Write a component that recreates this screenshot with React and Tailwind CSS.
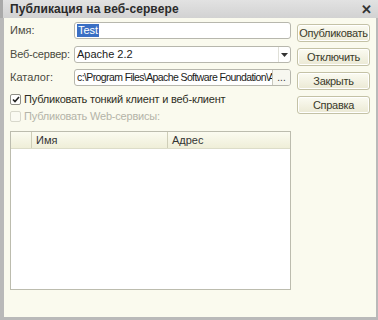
import React from "react";

const font = { fontFamily: '"Liberation Sans", Arial, sans-serif' };

function Btn({ children }) {
  return (
    <div className="h-[18px] w-[73px] flex items-center justify-center rounded-[3px] border border-[#c4c2a6] bg-gradient-to-b from-[#fbfbf2] to-[#ebe9d4] text-[11px] tracking-[-0.3px] text-[#3a3a2a] shadow-[inset_0_0_0_1px_#ffffff]">
      {children}
    </div>
  );
}

export default function App() {
  return (
    <div className="w-[378px] h-[320px] bg-[#b9b9b9] flex flex-col overflow-hidden" style={font}>
      <div className="h-[18px] flex items-center justify-between pl-[7px] pr-[6px] bg-gradient-to-b from-[#e2e2e2] to-[#d2d2d2] border-l-[3px] border-[#a9a9a9]">
        <span className="text-[12px] font-bold text-[#2a2a2a] tracking-[0.1px]">Публикация на веб-сервере</span>
        <span className="text-[13px] font-bold text-[#333] leading-none">✕</span>
      </div>
      <div className="flex-1 ml-[4px] mr-[2px] mb-[3px] bg-[#fafaee] flex pl-[6px] pt-[4px]">
        <div className="w-[281px] flex flex-col">
          <div className="flex items-center h-[17px]">
            <span className="w-[64px] text-[11px] text-[#4a4a3e]">Имя:</span>
            <div className="flex-1 h-[17px] rounded-[3px] border border-[#b7b7ad] bg-white flex items-center pl-[2px]">
              <span className="text-[11px] text-white bg-[#3a6fc4] px-[1px] leading-[13px]">Test</span>
            </div>
          </div>
          <div className="flex items-center h-[17px] mt-[7px]">
            <span className="w-[64px] text-[11px] tracking-[-0.2px] text-[#4a4a3e]">Веб-сервер:</span>
            <div className="flex-1 h-[17px] rounded-[3px] border border-[#b7b7ad] bg-white flex items-center pl-[2px]">
              <span className="flex-1 text-[11px] text-[#1a1a1a]">Apache 2.2</span>
              <div className="w-[12px] h-full flex items-center justify-center border-l border-[#e0e0d8]">
                <svg width="7" height="4" viewBox="0 0 7 4"><path d="M0 0h7L3.5 4z" fill="#333" /></svg>
              </div>
            </div>
          </div>
          <div className="flex items-center h-[17px] mt-[6px]">
            <span className="w-[64px] text-[11px] text-[#4a4a3e]">Каталог:</span>
            <div className="flex-1 min-w-0 h-[17px] rounded-[3px] border border-[#b7b7ad] bg-white flex items-center pl-[2px] overflow-hidden">
              <div className="flex-1 min-w-0 overflow-hidden">
                <span className="block text-[10.5px] tracking-[-0.6px] text-[#1a1a1a] whitespace-nowrap">c:\Program Files\Apache Software Foundation\A</span>
              </div>
              <div className="w-[18px] shrink-0 h-full flex items-center justify-center border-l border-[#c8c8be] bg-[#f7f7f0] text-[10px] text-[#333]">...</div>
            </div>
          </div>
          <div className="flex items-center h-[14px] mt-[6px]">
            <div className="w-[11px] h-[11px] rounded-[2px] border border-[#8e8e86] bg-white flex items-center justify-center">
              <svg width="8" height="7" viewBox="0 0 8 7"><path d="M1 3.5l2 2 4-4.5" stroke="#222" strokeWidth="1.6" fill="none" /></svg>
            </div>
            <span className="ml-[3px] text-[11px] tracking-[-0.2px] text-[#2e2e24]">Публиковать тонкий клиент и веб-клиент</span>
          </div>
          <div className="flex items-center h-[14px] mt-[3px]">
            <div className="w-[11px] h-[11px] rounded-[2px] border border-[#d8d8cc] bg-[#fafaf2]" />
            <span className="ml-[3px] text-[11px] tracking-[-0.2px] text-[#b4b4a8]">Публиковать Web-сервисы:</span>
          </div>
          <div className="mt-[8px] h-[159px] border border-[#bcbcae] bg-white flex flex-col">
            <div className="h-[17px] flex bg-gradient-to-b from-[#fbfbf0] to-[#efeed8] border-b border-[#dcdcc8] text-[11px] text-[#333]">
              <div className="w-[21px] border-r border-[#cfceb8]" />
              <div className="w-[136px] border-r border-[#cfceb8] flex items-center pl-[4px]">Имя</div>
              <div className="flex-1 flex items-center pl-[4px]">Адрес</div>
            </div>
          </div>
        </div>
        <div className="flex flex-col gap-[6px] ml-[6px] mt-[2px]">
          <Btn>Опубликовать</Btn>
          <Btn>Отключить</Btn>
          <Btn>Закрыть</Btn>
          <Btn>Справка</Btn>
        </div>
      </div>
    </div>
  );
}
